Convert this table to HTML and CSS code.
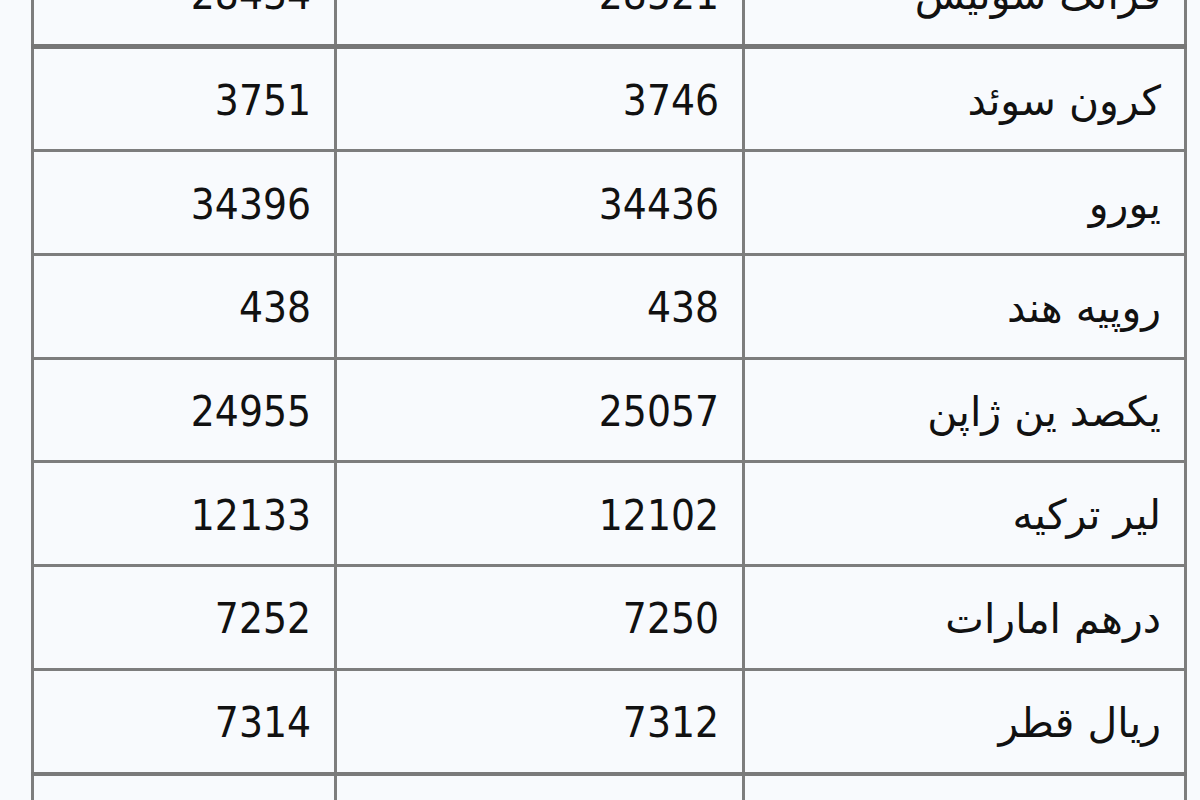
FILE: index.html
```html
<!DOCTYPE html>
<html lang="fa">
<head>
<meta charset="utf-8">
<title>نرخ ارز</title>
<link rel="stylesheet" href="styles.css">
</head>
<body>
<table class="rates" dir="rtl">
  <colgroup>
    <col class="c-name">
    <col class="c-mid">
    <col class="c-last">
  </colgroup>
  <tbody>
    <tr class="first"><td class="name">فرانک سوئیس</td><td>28521</td><td>28434</td></tr>
    <tr><td class="name">کرون سوئد</td><td>3746</td><td>3751</td></tr>
    <tr><td class="name">یورو</td><td>34436</td><td>34396</td></tr>
    <tr><td class="name">روپیه هند</td><td>438</td><td>438</td></tr>
    <tr><td class="name">یکصد ین ژاپن</td><td>25057</td><td>24955</td></tr>
    <tr><td class="name">لیر ترکیه</td><td>12102</td><td>12133</td></tr>
    <tr><td class="name">درهم امارات</td><td>7250</td><td>7252</td></tr>
    <tr class="last-full"><td class="name">ریال قطر</td><td>7312</td><td>7314</td></tr>
    <tr><td class="name"></td><td></td><td></td></tr>
  </tbody>
</table>
</body>
</html>
```

FILE: styles.css
```css
html, body {
  margin: 0;
  padding: 0;
  background: #f8fafd;
  overflow: hidden;
}

.rates {
  margin: -60px 0 0 31px;
  width: 1153px;
  table-layout: fixed;
  border-collapse: collapse;
  font-family: "DejaVu Sans Condensed", "DejaVu Sans", Tahoma, sans-serif;
  font-size: 42px;
  color: #111;
}

.c-name { width: 442px; }
.c-mid { width: 408px; }
.c-last { width: 303px; }

.rates td {
  border: 3px solid #7d7d7d;
  height: 96.7px;
  padding: 4px 23px 0 10px;
  text-align: right;
  vertical-align: middle;
  line-height: 1;
}

.rates td.name {
  font-family: "DejaVu Sans", Tahoma, sans-serif;
  font-size: 41px;
}

.rates tr.first td {
  border-bottom: 5px solid #777;
}

.rates tr.last-full td {
  border-bottom: 4px solid #7a7a7a;
}
```
